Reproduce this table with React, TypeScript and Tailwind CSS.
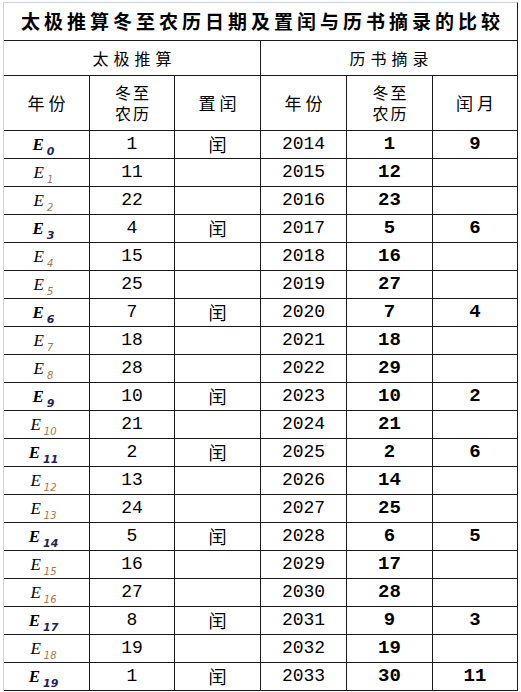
import React from "react";

const rows: [number, string, boolean, string, string, string][] = [
  [0, "1", true, "2014", "1", "9"],
  [1, "11", false, "2015", "12", ""],
  [2, "22", false, "2016", "23", ""],
  [3, "4", true, "2017", "5", "6"],
  [4, "15", false, "2018", "16", ""],
  [5, "25", false, "2019", "27", ""],
  [6, "7", true, "2020", "7", "4"],
  [7, "18", false, "2021", "18", ""],
  [8, "28", false, "2022", "29", ""],
  [9, "10", true, "2023", "10", "2"],
  [10, "21", false, "2024", "21", ""],
  [11, "2", true, "2025", "2", "6"],
  [12, "13", false, "2026", "14", ""],
  [13, "24", false, "2027", "25", ""],
  [14, "5", true, "2028", "6", "5"],
  [15, "16", false, "2029", "17", ""],
  [16, "27", false, "2030", "28", ""],
  [17, "8", true, "2031", "9", "3"],
  [18, "19", false, "2032", "19", ""],
  [19, "1", true, "2033", "30", "11"],
];

const cjk = "font-['Noto_Sans_CJK_SC',sans-serif]";
const mono = "font-['Liberation_Mono',monospace]";
const cell = "flex items-center justify-center border-b border-r border-[#1a1a1a] h-[28px]";
const lastCell = "flex items-center justify-center border-b border-[#1a1a1a] h-[28px]";

function ELabel({ n, bold }: { n: number; bold: boolean }) {
  return (
    <span className="inline-flex items-baseline pr-[6px]">
      <span
        className={`font-['Liberation_Serif',serif] italic text-[17px] leading-none text-black ${
          bold ? "font-bold" : "font-normal"
        }`}
      >
        E
      </span>
      <span
        className={`relative top-[5px] ml-[3px] font-['DejaVu_Sans',sans-serif] italic leading-none ${
          bold ? "font-bold text-[11px] text-[#1c2458]" : "font-normal text-[10px] text-[#b0743f]"
        }`}
      >
        {n}
      </span>
    </span>
  );
}

export default function App() {
  return (
    <div className="w-[521px] h-[692px] bg-white overflow-hidden pt-[2px] pl-[3px]">
      <div className="w-[515px] border-l border-t border-r border-l-[#c9d2e6] border-t-[#c9d2e6] border-r-[#1a1a1a] grid grid-cols-[86px_85px_86px_86px_86px_84px] text-black">
        <div
          className={`col-span-6 h-[38px] border-b border-[#1a1a1a] flex items-center justify-center ${cjk} font-bold text-[19px] tracking-[4px] pl-[4px]`}
        >
          太极推算冬至农历日期及置闰与历书摘录的比较
        </div>
        <div
          className={`col-span-3 h-[35px] border-b border-r border-[#1a1a1a] flex items-center justify-center ${cjk} text-[16px] tracking-[5px] pl-[5px]`}
        >
          太极推算
        </div>
        <div
          className={`col-span-3 h-[35px] border-b border-[#1a1a1a] flex items-center justify-center ${cjk} text-[16px] tracking-[5px] pl-[5px]`}
        >
          历书摘录
        </div>
        {[0, 1].map((side) => (
          <React.Fragment key={side}>
            <div className={`h-[55px] border-b border-r border-[#1a1a1a] flex items-center justify-center ${cjk} text-[17px] tracking-[4px] pl-[4px]`}>
              年份
            </div>
            <div className={`h-[55px] border-b border-r border-[#1a1a1a] flex flex-col items-center justify-center ${cjk} text-[16px] leading-[21px] tracking-[2px] pl-[2px]`}>
              <span className="block leading-[21px]">冬至</span>
              <span className="block leading-[21px]">农历</span>
            </div>
            <div
              className={`h-[55px] border-b ${side === 0 ? "border-r" : ""} border-[#1a1a1a] flex items-center justify-center ${cjk} text-[17px] tracking-[4px] pl-[4px]`}
            >
              {side === 0 ? "置闰" : "闰月"}
            </div>
          </React.Fragment>
        ))}
        {rows.map(([n, dz, run, yr, dz2, rm]) => (
          <React.Fragment key={n}>
            <div className={cell}>
              <ELabel n={n} bold={run} />
            </div>
            <div className={`${cell} ${mono} text-[18px]`}>{dz}</div>
            <div className={`${cell} ${cjk} text-[18px]`}>{run ? "闰" : ""}</div>
            <div className={`${cell} ${mono} text-[18px]`}>{yr}</div>
            <div className={`${cell} ${mono} text-[19px] font-bold`}>{dz2}</div>
            <div className={`${lastCell} ${mono} text-[19px] font-bold`}>{rm}</div>
          </React.Fragment>
        ))}
      </div>
    </div>
  );
}
